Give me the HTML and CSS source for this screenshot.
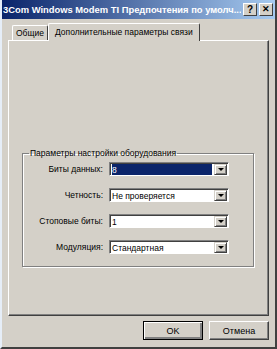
FILE: index.html
```html
<!DOCTYPE html>
<html lang="ru">
<head>
    <meta charset="UTF-8">
    <title>Свойства модема</title>
    <link rel="stylesheet" href="styles.css">
</head>
<body>
<div class="window">
    <div class="titlebar">
        <span class="title">3Com Windows Modem TI Предпочтения по умолч...</span>
        <span class="capbtn">?</span>
        <span class="capbtn close">&#x2715;</span>
    </div>
    <div class="client">
        <ul class="tabs">
            <li class="tab">Общие</li>
            <li class="tab current">Дополнительные параметры связи</li>
        </ul>
        <div class="panel">
            <fieldset class="group">
                <legend>Параметры настройки оборудования</legend>
                <div class="rows">
                    <label>Биты данных:</label>
                    <div class="combo focus"><span class="val">8</span><span class="arrow"></span></div>
                    <label>Четность:</label>
                    <div class="combo"><span class="val">Не проверяется</span><span class="arrow"></span></div>
                    <label>Стоповые биты:</label>
                    <div class="combo"><span class="val">1</span><span class="arrow"></span></div>
                    <label>Модуляция:</label>
                    <div class="combo"><span class="val">Стандартная</span><span class="arrow"></span></div>
                </div>
            </fieldset>
        </div>
        <div class="buttons">
            <button class="btn default">OK</button>
            <button class="btn">Отмена</button>
        </div>
    </div>
</div>
</body>
</html>
```

FILE: styles.css
```css
body,div,ul,li,fieldset,legend{margin:0;padding:0;}
ul{list-style-type:none;}
body{background:#fff;font:8.5px/12px "Liberation Sans",Arial,sans-serif;color:#000;}
.window{box-sizing:border-box;width:277px;height:349px;background:#d4d0c8;display:flex;flex-direction:column;border-left:2px solid #e6eef8;border-right:2px solid #404040;border-bottom:2px solid #404040;}
.titlebar{height:19px;display:flex;align-items:center;padding:0 2px 0 1px;background:linear-gradient(to right,#0a246a,#a6caf0);}
.title{flex:1;color:#fff;font-weight:bold;font-size:9.4px;white-space:nowrap;overflow:hidden;}
.capbtn{box-sizing:border-box;width:14px;height:13px;margin-left:2px;background:#d4d0c8;border:1px solid;border-color:#fff #404040 #404040 #fff;font-weight:bold;font-size:10px;line-height:11px;text-align:center;}
.close{font-size:9px;}
.client{flex:1;display:flex;flex-direction:column;padding:4px 6px 7px 6px;}
.tabs{display:flex;align-items:flex-end;height:17px;padding-left:4px;}
.tab{box-sizing:border-box;height:15px;padding:1px 3px 0;border:1px solid;border-bottom:0;border-color:#fff #404040 #fff #fff;border-radius:2px 2px 0 0;white-space:nowrap;}
.tab.current{height:18px;padding:2px 6px 0;margin-bottom:-1px;background:#d4d0c8;position:relative;z-index:1;}
.panel{flex:1;border:1px solid;border-color:#fff #404040 #404040 #fff;box-shadow:inset -1px -1px #808080;padding:106px 14px 0 13px;}
.group{border:1px solid #808080;box-shadow:inset 1px 1px #fff,1px 1px #fff;padding:3px 0 12px;}
.group legend{margin-left:6px;padding:0 1px;}
.rows{display:grid;grid-template-columns:80px 120px;column-gap:6px;row-gap:12px;align-items:center;}
.rows label{text-align:right;}
.combo{box-sizing:border-box;height:14px;display:flex;background:#fff;border:1px solid;border-color:#808080 #fff #fff #808080;box-shadow:inset 1px 1px #404040;padding:1px 1px 0 2px;}
.combo .val{flex:1;line-height:12px;white-space:nowrap;}
.combo.focus .val{background:#0a246a;color:#fff;margin-right:2px;}
.arrow{box-sizing:border-box;width:13px;height:11px;background:#d4d0c8;border:1px solid;border-color:#d4d0c8 #404040 #404040 #d4d0c8;box-shadow:inset 1px 1px #fff,inset -1px -1px #808080;display:flex;align-items:center;justify-content:center;}
.arrow::after{content:"";border-left:3px solid transparent;border-right:3px solid transparent;border-top:3px solid #000;}
.buttons{display:flex;justify-content:flex-end;gap:6px;padding-top:5px;}
.btn{box-sizing:border-box;width:60px;height:19px;background:#d4d0c8;border:1px solid;border-color:#fff #404040 #404040 #fff;box-shadow:inset -1px -1px #808080;font:9px "Liberation Sans",Arial,sans-serif;color:#000;padding:0;}
.btn.default{border-color:#000;box-shadow:inset 1px 1px #fff,inset -2px -2px #808080;}
```
